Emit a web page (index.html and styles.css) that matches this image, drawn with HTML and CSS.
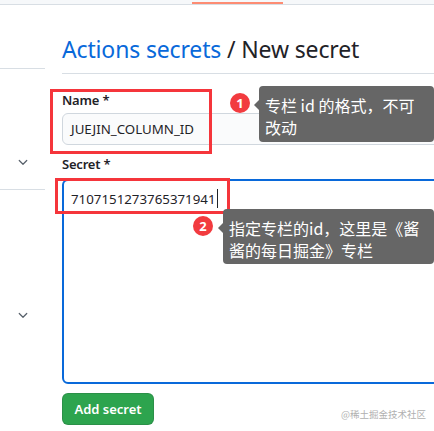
FILE: index.html
```html
<!DOCTYPE html>
<html lang="zh">
<head>
<meta charset="utf-8">
<title>New secret</title>
<link rel="stylesheet" href="styles.css">
</head>
<body>
<div class="topbar"><div class="tab-underline"></div></div>
<div class="layout">
  <aside class="sidebar">
    <div class="side-sep first"></div>
    <div class="side-chevron one">
      <svg width="12" height="12" viewBox="0 0 16 16"><path d="M3 6l5 5 5-5" fill="none" stroke="#57606a" stroke-width="1.6" stroke-linecap="round" stroke-linejoin="round"/></svg>
    </div>
    <div class="side-sep second"></div>
    <div class="side-chevron two">
      <svg width="12" height="12" viewBox="0 0 16 16"><path d="M3 6l5 5 5-5" fill="none" stroke="#57606a" stroke-width="1.6" stroke-linecap="round" stroke-linejoin="round"/></svg>
    </div>
  </aside>
  <main class="main">
    <h1 class="title"><a class="title-link">Actions secrets</a> / New secret</h1>
    <form class="form">
      <label class="label">Name *</label>
      <div class="input">JUEJIN_COLUMN_ID</div>
      <label class="label secret-label">Secret *</label>
      <div class="textarea"><span class="secret-value">7107151273765371941</span><span class="caret"></span></div>
      <div class="actions">
        <button type="button" class="btn">Add secret</button>
        <span class="watermark">@稀土掘金技术社区</span>
      </div>
    </form>
  </main>
</div>

<div class="mark mark-name"></div>
<div class="mark mark-secret"></div>
<div class="badge badge-1">1</div>
<div class="tip tip-1"><div class="tip-line">专栏 id 的格式，不可</div><div class="tip-line">改动</div></div>
<div class="badge badge-2">2</div>
<div class="tip tip-2"><div class="tip-line">指定专栏的id，这里是《酱</div><div class="tip-line">酱的每日掘金》专栏</div></div>
</body>
</html>
```
FILE: styles.css
```css
html, body {
  margin: 0;
  padding: 0;
}
body {
  width: 434px;
  height: 431px;
  overflow: hidden;
  position: relative;
  background: #ffffff;
  font-family: "Noto Sans", "Noto Sans CJK SC", sans-serif;
  color: #1f2328;
}
.topbar {
  height: 4px;
  background: #f6f8fa;
  border-bottom: 1px solid #d8dee4;
  display: flex;
  align-items: flex-end;
}
.tab-underline {
  margin-left: 192px;
  width: 91px;
  height: 2px;
  background: #fd8c73;
}
.layout {
  display: flex;
}
.sidebar {
  width: 45px;
  flex: none;
}
.side-sep {
  height: 1px;
  background: #d8dee4;
}
.side-sep.first { margin-top: 63px; }
.side-chevron {
  display: flex;
  justify-content: center;
  width: 45px;
  height: 12px;
}
.side-chevron.one { margin-top: 87px; }
.side-sep.second { margin-top: 21px; }
.side-chevron.two { margin-top: 119px; }
.main {
  flex: none;
  width: 420px;
  padding-left: 17px;
  padding-top: 26px;
}
.title {
  margin: 0;
  font-weight: 400;
  font-size: 23px;
  line-height: 36px;
  padding-bottom: 6px;
  border-bottom: 1px solid #d8dee4;
  white-space: nowrap;
  letter-spacing: -0.15px;
}
.title-link {
  color: #0969da;
}
.form {
  display: flex;
  flex-direction: column;
  padding-top: 16px;
}
.label {
  font-size: 13px;
  font-weight: 600;
  line-height: 20px;
  margin-bottom: 3px;
  letter-spacing: -0.2px;
}
.secret-label {
  margin-top: 9px;
  margin-bottom: 5px;
}
.input {
  box-sizing: border-box;
  height: 32px;
  border: 1px solid #d0d7de;
  border-radius: 6px;
  background: #fafbfc;
  font-size: 13.3px;
  line-height: 30px;
  padding-left: 8px;
}
.textarea {
  box-sizing: border-box;
  height: 205px;
  border: 2px solid #0969da;
  border-radius: 6px;
  font-size: 13.3px;
  line-height: 20px;
  padding: 8px 7px;
  display: flex;
  align-items: flex-start;
}
.caret {
  width: 1px;
  height: 19px;
  background: #1f2328;
  margin-left: 1px;
}
.actions {
  display: flex;
  align-items: center;
  margin-top: 9px;
}
.btn {
  height: 32px;
  width: 92px;
  border: 1px solid rgba(31,35,40,0.15);
  border-radius: 6px;
  background: #2da44e;
  color: #ffffff;
  font-family: "Noto Sans", sans-serif;
  font-size: 13px;
  font-weight: 600;
  padding: 0;
}
.watermark {
  margin-left: 187px;
  margin-top: 9px;
  font-size: 9.5px;
  color: #b0b0b0;
  font-family: "Noto Sans CJK SC", sans-serif;
}
.mark {
  position: absolute;
  border: 3px solid #f5353b;
  box-sizing: border-box;
}
.mark-name {
  left: 50px;
  top: 89px;
  width: 162px;
  height: 65px;
}
.mark-secret {
  left: 55px;
  top: 178px;
  width: 175px;
  height: 36px;
}
.badge {
  position: absolute;
  width: 20px;
  height: 20px;
  border-radius: 50%;
  background: #f23b3f;
  color: #ffffff;
  font-size: 13px;
  font-weight: 700;
  line-height: 20px;
  text-align: center;
  font-family: "Noto Sans", sans-serif;
}
.badge-1 { left: 230px; top: 93px; }
.badge-2 { left: 193px; top: 216px; }
.tip {
  position: absolute;
  background: #666666;
  color: #ffffff;
  font-family: "Noto Sans CJK SC", sans-serif;
  font-size: 16px;
  line-height: 22px;
  border-radius: 4px;
  padding: 8px 6px 5px;
  box-sizing: border-box;
  display: flex;
  flex-direction: column;
}
.tip-line {
  height: 22px;
  white-space: nowrap;
}
.tip::before {
  content: "";
  position: absolute;
  left: -5px;
  top: 14px;
  border-top: 5px solid transparent;
  border-bottom: 5px solid transparent;
  border-right: 5px solid #666666;
}
.tip-1 {
  left: 259px;
  top: 86px;
  width: 175px;
  height: 56px;
}
.tip-2 {
  left: 223px;
  top: 209px;
  width: 211px;
  height: 55px;
  padding-top: 8px;
}
```
